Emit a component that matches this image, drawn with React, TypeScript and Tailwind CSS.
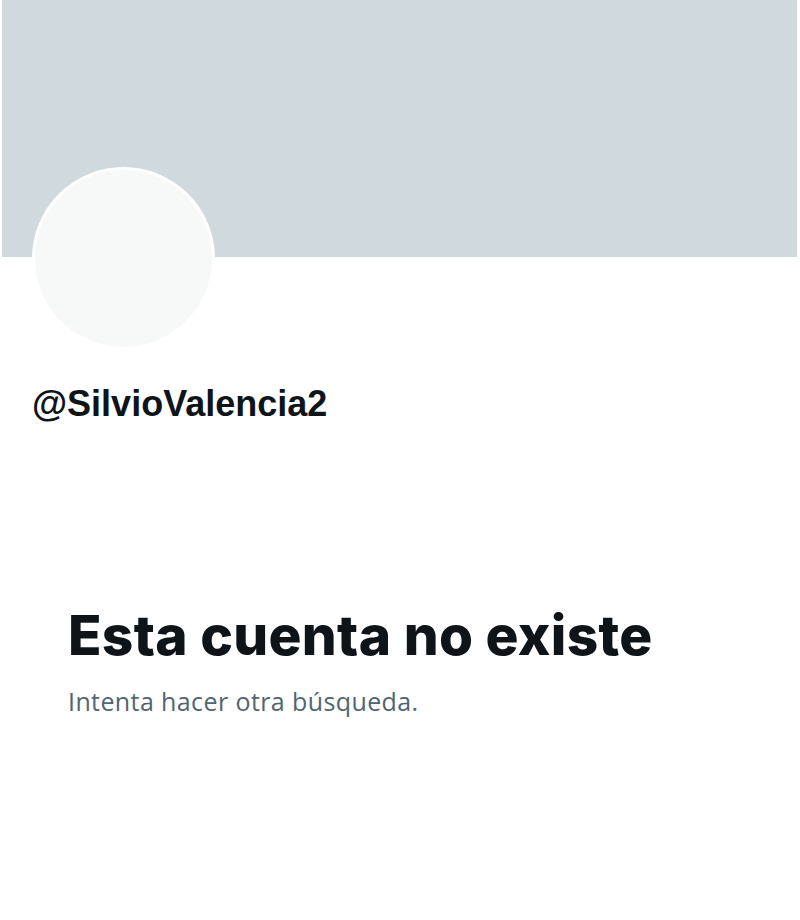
export default function App() {
  return (
    <div className="w-[800px] h-[920px] bg-white overflow-hidden">
      {/* banner */}
      <div className="ml-[2px] mr-[3px] h-[257px] bg-[#cfd9de]" />

      {/* avatar + handle */}
      <div className="px-[32px]">
        <div className="-mt-[90px] w-[183px] h-[183px] rounded-full bg-[#f7f9f9] border-[3px] border-white" />
        <div
          className="mt-[36px] text-[36px] font-bold leading-none text-[#0f1419]"
          style={{ fontFamily: '"Liberation Sans", Arial, sans-serif' }}
        >
          @SilvioValencia2
        </div>
      </div>

      {/* empty state */}
      <div className="px-[68px] mt-[186px]">
        <h1
          className="text-[55px] font-extrabold leading-none tracking-[0.3px] text-[#0f1419]"
          style={{ fontFamily: 'Inter, "Liberation Sans", sans-serif' }}
        >
          Esta cuenta no existe
        </h1>
        <p
          className="mt-[26px] text-[25px] leading-none tracking-[0.4px] text-[#536471]"
          style={{ fontFamily: '"Open Sans", Roboto, sans-serif' }}
        >
          Intenta hacer otra búsqueda.
        </p>
      </div>
    </div>
  );
}
